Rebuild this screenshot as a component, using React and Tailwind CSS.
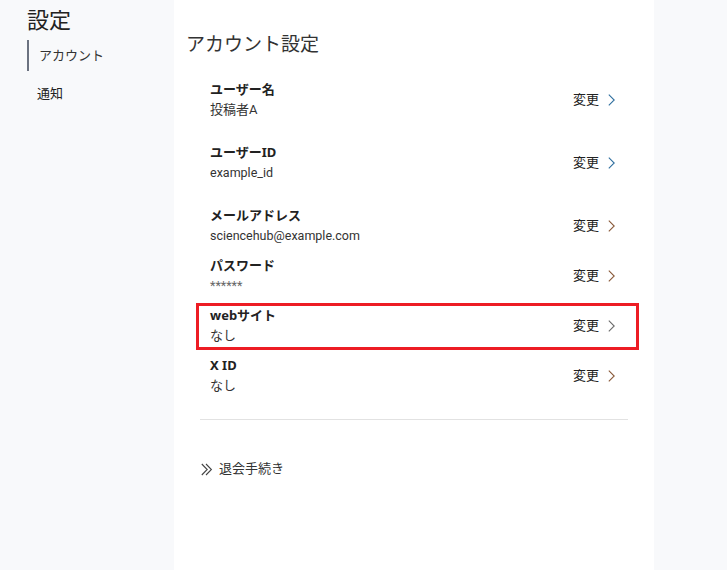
const rows = [
  { label: "ユーザー名", value: "投稿者A", h: "h-[63px]", c: "#2f6f9f" },
  { label: "ユーザーID", value: "example_id", h: "h-[63px]", c: "#2f6f9f", v: "text-[12.5px]" },
  { label: "メールアドレス", value: "sciencehub@example.com", h: "h-[50px]", c: "#8a5a3a", v: "text-[12.5px]" },
  { label: "パスワード", value: "******", h: "h-[50px]", c: "#8a5a3a", v: "text-[12.5px] text-[#666]" },
  { label: "webサイト", value: "なし", h: "h-[50px]", c: "#6b6b6b", boxed: true },
  { label: "X ID", value: "なし", h: "h-[50px]", c: "#8a5a3a" },
];

function Chevron({ color }) {
  return (
    <svg width="7" height="12" viewBox="0 0 7 12" fill="none" className="ml-[9px]">
      <path d="M.8.6l5.4 5.4-5.4 5.4" stroke={color} strokeWidth="1.1" />
    </svg>
  );
}

function Row({ label, value, h, c, boxed, v = "text-[13px]" }) {
  return (
    <div className={`relative flex ${h} items-start justify-between pl-[10px] pr-[13px]`}>
      <div className="flex flex-col">
        <span className="mb-[2px] font-['Noto_Sans','Noto_Sans_CJK_JP',sans-serif] text-[13px] leading-[18px] font-bold text-[#222]">{label}</span>
        <span className={`${v} leading-[19px] text-[#333]`}>{value}</span>
      </div>
      <div className="flex h-[40px] items-center">
        <span className="text-[13px] text-[#222]">変更</span>
        <Chevron color={c} />
      </div>
      {boxed && <div className="absolute left-[-4px] top-[-3px] h-[47px] w-[443px] border-[3px] border-[#ed1c24]" />}
    </div>
  );
}

export default function App() {
  return (
    <div className="flex h-[570px] w-[727px] overflow-hidden bg-[#f8f9fb] text-[#222] font-['Roboto','Noto_Sans_CJK_JP',sans-serif]">
      <aside className="w-[174px] shrink-0 pl-[27px] pt-[7px]">
        <h1 className="text-[22px] leading-[28px] font-normal text-[#222]">設定</h1>
        <div className="mt-[5px] flex h-[31px] items-center border-l-2 border-[#6b7280] pl-[10px] text-[13px] text-[#333]">アカウント</div>
        <div className="mt-[13px] pl-[10px] text-[13px] leading-[20px] text-[#222]">通知</div>
      </aside>
      <main className="w-[480px] shrink-0 bg-white pl-[12px] pt-[31px]">
        <h2 className="text-[19px] leading-[28px] font-normal text-[#333]">アカウント設定</h2>
        <div className="ml-[14px] mt-[21px] w-[428px]">
          {rows.map((r) => <Row key={r.label} {...r} />)}
          <div className="mt-[13px] h-px bg-[#e2e2e2]" />
          <div className="mt-[39px] flex items-center pl-[1px]">
            <svg width="12" height="13" viewBox="0 0 12 13" fill="none" className="mr-[6px]">
              <path d="M.8 1l5.4 5.5-5.4 5.5M5 1l5.4 5.5-5.4 5.5" stroke="#444" strokeWidth="1.1" />
            </svg>
            <span className="text-[13px] leading-[20px] text-[#333]">退会手続き</span>
          </div>
        </div>
      </main>
    </div>
  );
}
